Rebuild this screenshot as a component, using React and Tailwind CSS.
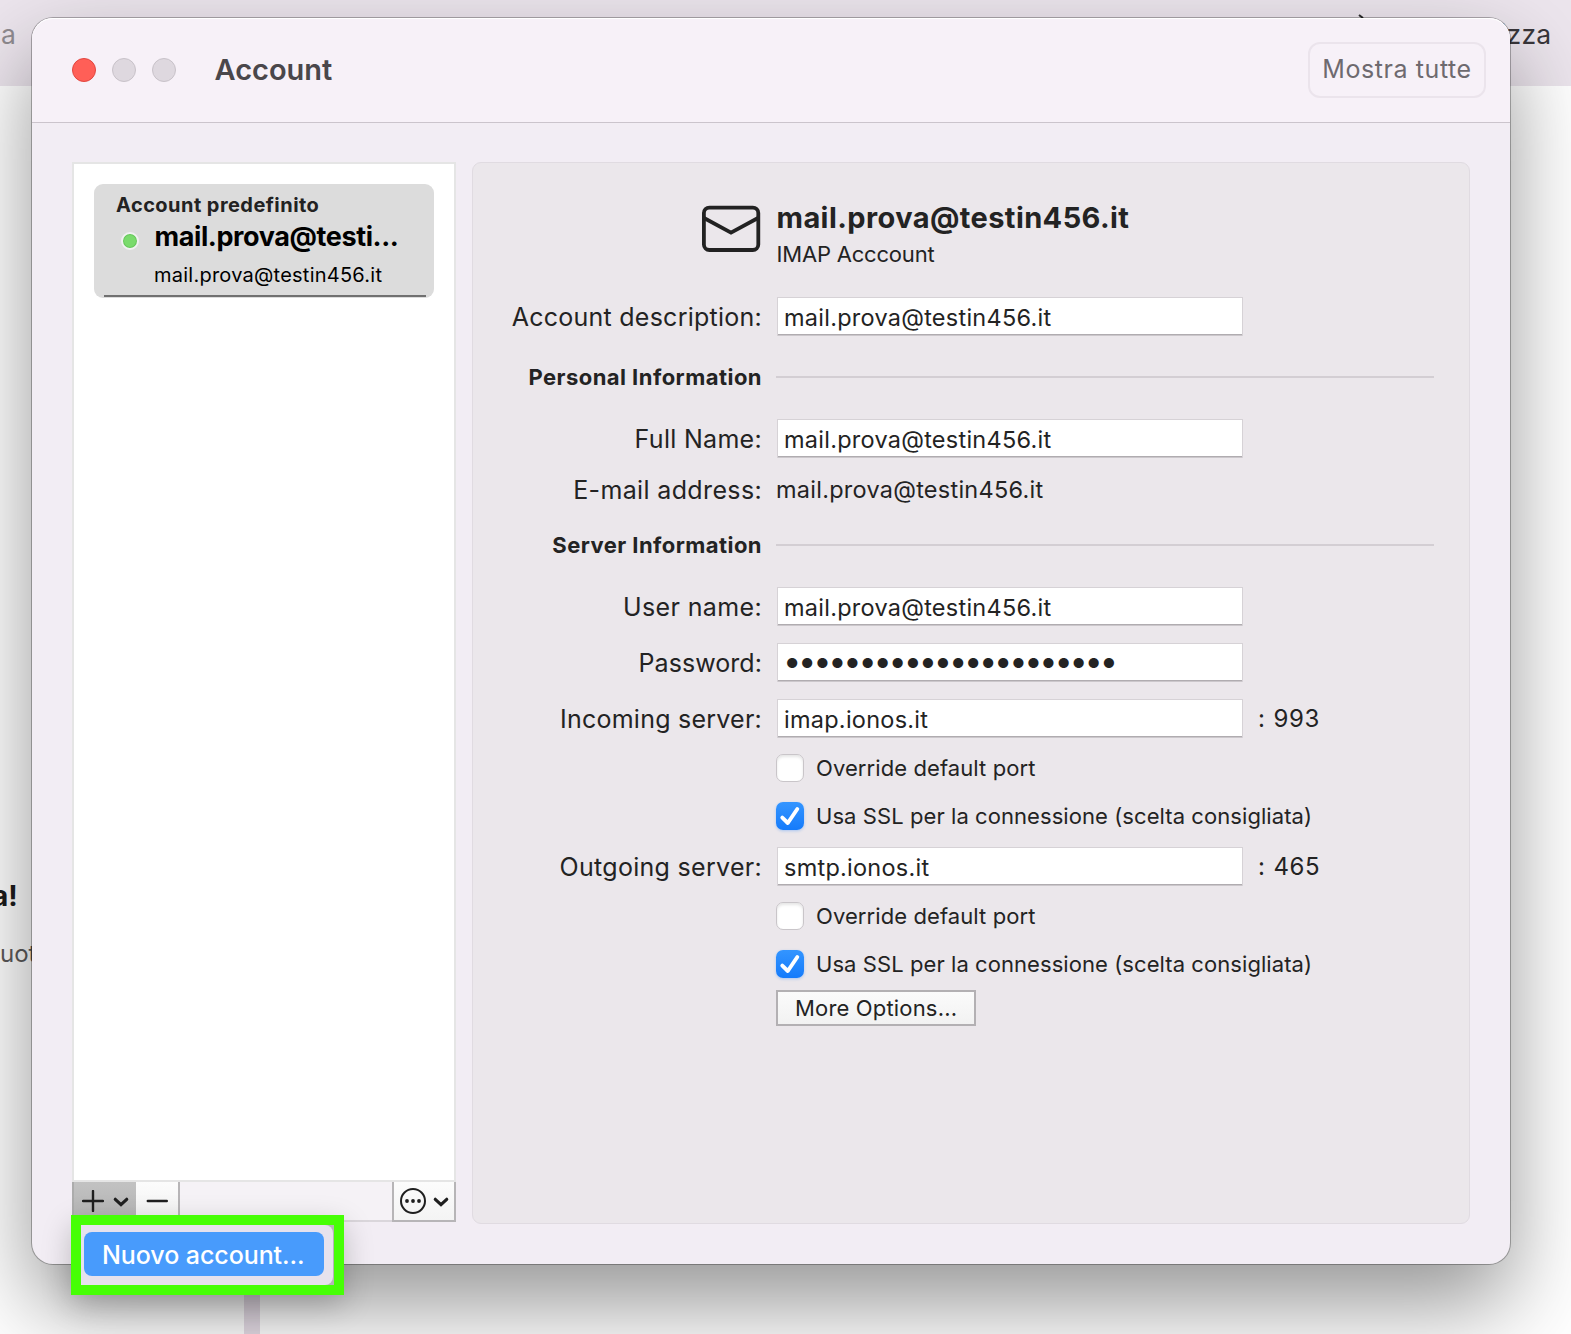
import React from "react";

const label = "w-[289px] shrink-0 text-right text-[25px] leading-[30px] whitespace-nowrap";

function Row({ text, spacing = "tracking-[0.3px]", children, className = "" }) {
  return (
    <div className={`flex items-center ${className}`}>
      <div className={`${label} ${spacing}`}>{text}</div>
      <div className="ml-[14px] flex items-center">{children}</div>
    </div>
  );
}

function Field({ children, className = "" }) {
  return (
    <div className="ml-px h-[39px] w-[466px] border border-b-0 border-[#d6d2d6] bg-white">
      <div className="h-[37px] border-b border-[#b0acb0]">
        <div
          className={`flex h-[38px] items-center border-b border-[#cbc7cb] pt-[2px] pl-[6px] text-[23.5px] tracking-[0.25px] whitespace-nowrap ${className}`}
        >
          {children}
        </div>
      </div>
    </div>
  );
}

function Section({ text, spacing, className }) {
  return (
    <div className={`flex h-[25px] items-center ${className}`}>
      <div className={`w-[290px] pr-px text-right text-[22px] font-bold ${spacing}`}>{text}</div>
      <div className="mb-[2px] ml-[13px] h-[2px] w-[658px] bg-[#d3ced3]" />
    </div>
  );
}

function Check({ checked, text, spacing, className }) {
  return (
    <div className={`ml-[303px] flex h-7 items-center ${className}`}>
      {checked ? (
        <div className="flex size-7 items-center justify-center rounded-[7px] bg-linear-to-b from-[#3395ff] to-[#147bfb] shadow-[0_1px_3px_rgba(20,123,251,0.3)]">
          <svg viewBox="0 0 28 28" className="size-7" fill="none">
            <path d="M6.3 15.6 11.8 21 21.3 7" stroke="#fff" strokeWidth="3.9" strokeLinecap="round" strokeLinejoin="round" />
          </svg>
        </div>
      ) : (
        <div className="size-7 rounded-[7px] border border-[#c9c5c9] bg-white shadow-[inset_0_2px_3px_rgba(0,0,0,0.1)]" />
      )}
      <span className={`ml-3 text-[22px] whitespace-nowrap ${spacing}`}>{text}</span>
    </div>
  );
}

function Port({ value }) {
  return (
    <div className="flex text-[24px]">
      <span className="ml-[15px] w-[15.5px]">:</span>
      <span className="tracking-[0.6px]">{value}</span>
    </div>
  );
}

function Chevron() {
  return (
    <svg viewBox="0 0 16 10" className="h-[10px] w-4" fill="none">
      <path d="M2.3 2.3 8 7.6 13.7 2.3" stroke="#1f1f1f" strokeWidth="3.2" strokeLinecap="round" strokeLinejoin="miter" />
    </svg>
  );
}

function Backdrop() {
  return (
    <div className="h-full w-full bg-white">
      <div className="flex h-[86px] items-start justify-between bg-[#ece5ed] pr-[19.5px] text-[26.5px] leading-[30px]">
        <div className="mt-[19px] ml-px text-[#8f8b90]">a</div>
        <div className="mt-[19px] tracking-[0.3px] text-[#39363a]">Organizza</div>
      </div>
      <div className="flex h-[1248px] flex-col">
        <div className="mt-[792px] -ml-[8px] h-9 text-[28px] leading-9 font-bold text-[#1c1c1c]">a!</div>
        <div className="mt-[24px] h-8 text-[24px] leading-8 text-[#5c5a5a]">uota</div>
        <div className="ml-[244px] w-4 flex-1 bg-[#e6dde7]" />
      </div>
    </div>
  );
}

function Sidebar() {
  return (
    <div className="flex h-[1060px] w-[384px] flex-col">
      <div className="h-[1020px] border-2 border-[#e5e5e5] bg-white pt-5 pl-5">
        <div className="h-[114px] w-[340px] rounded-[9px] bg-[#dcdcdc] pt-2">
          <div className="ml-[22px] text-[20px] leading-[26px] font-bold tracking-[0.45px] text-[#222]">Account predefinito</div>
          <div className="flex h-9 items-center">
            <div className="mt-[9px] ml-[27px] size-[18px] rounded-full border-2 border-[#f1f1f1] bg-[#7adb6c] shadow-[inset_0_0_0_1px_#66c55b]" />
            <div className="mt-[2px] ml-[15.5px] text-[27px] font-bold tracking-[-0.4px] text-black">mail.prova@testi...</div>
          </div>
          <div className="mt-2 ml-[60px] text-[20px] leading-[26px] tracking-[0.24px] text-black">mail.prova@testin456.it</div>
          <div className="mt-[7px] ml-[10px] h-[2px] w-[322px] bg-[#707070]" />
        </div>
      </div>
      <div className="flex h-10 border-b-2 border-[#dad6db] bg-[#f5f2f6]">
        <div className="flex h-10 w-16 items-center border-l-2 border-[#acacac] bg-linear-to-b from-[#c2c2c2] to-[#b2b2b2] pb-[2px]">
          <svg viewBox="0 0 22 22" className="ml-2 size-[22px]" fill="none">
            <path d="M11 1v20M1 11h20" stroke="#1f1f1f" strokeWidth="2.4" strokeLinecap="round" />
          </svg>
          <div className="mt-px ml-[9px]"><Chevron /></div>
        </div>
        <div className="flex h-10 w-11 items-center border-r-2 border-[#b7b5b7] bg-linear-to-b from-[#fcfcfc] to-[#f0f0f0]">
          <svg viewBox="0 0 22 22" className="ml-[10px] size-[22px]" fill="none">
            <path d="M1.8 10h19" stroke="#1f1f1f" strokeWidth="2.4" strokeLinecap="round" />
          </svg>
        </div>
        <div className="ml-auto flex h-10 w-16 items-center border-x-2 border-b-2 border-[#b7b5b7] bg-linear-to-b from-[#fcfcfc] to-[#f4f4f4]">
          <svg viewBox="0 0 28 28" className="ml-[5px] size-7" fill="none">
            <circle cx="14" cy="14" r="12" stroke="#1f1f1f" strokeWidth="2" />
            <circle cx="8" cy="14" r="1.9" fill="#1f1f1f" />
            <circle cx="14" cy="14" r="1.9" fill="#1f1f1f" />
            <circle cx="20" cy="14" r="1.9" fill="#1f1f1f" />
          </svg>
          <div className="mt-px ml-[6px]"><Chevron /></div>
        </div>
      </div>
    </div>
  );
}

function Details() {
  return (
    <div className="ml-4 h-[1062px] w-[998px] rounded-[9px] border border-[#e0dbe1] bg-[#ebe7eb] text-[#232323]">
      <div className="flex h-[134px] pt-[38px]">
        <svg viewBox="0 0 60 50" className="mt-[3px] ml-[228px] h-[50px] w-[60px]" fill="none" stroke="#222" strokeWidth="3.8">
          <rect x="2.9" y="3.6" width="54.4" height="42.4" rx="5.5" />
          <path d="M3 14 30 28.6 57 14" />
        </svg>
        <div className="ml-[15.5px]">
          <div className="text-[29px] leading-[34px] font-bold tracking-[0.41px]">mail.prova@testin456.it</div>
          <div className="mt-1 text-[22px] leading-[30px] tracking-[-0.19px]">IMAP Acccount</div>
        </div>
      </div>
      <Row text="Account description:" spacing="tracking-[0.25px]">
        <Field>mail.prova@testin456.it</Field>
      </Row>
      <Section text="Personal Information" spacing="tracking-[0.46px]" className="mt-[29px]" />
      <Row text="Full Name:" spacing="tracking-[0.3px]" className="mt-[29px]">
        <Field>mail.prova@testin456.it</Field>
      </Row>
      <Row text="E-mail address:" spacing="tracking-[0.36px]" className="mt-[17px] h-[29px]">
        <span className="text-[23.5px] tracking-[0.25px]">mail.prova@testin456.it</span>
      </Row>
      <Section text="Server Information" spacing="tracking-[0.44px]" className="mt-[29px]" />
      <Row text="User name:" spacing="tracking-[0.36px]" className="mt-[29px]">
        <Field>mail.prova@testin456.it</Field>
      </Row>
      <Row text="Password:" spacing="tracking-[0.06px]" className="mt-[17px]">
        <Field>
          <span className="pl-[2px] text-[13.5px] tracking-[2.74px]">●●●●●●●●●●●●●●●●●●●●●●</span>
        </Field>
      </Row>
      <Row text="Incoming server:" spacing="tracking-[0.24px]" className="mt-[17px]">
        <Field>imap.ionos.it</Field>
        <Port value="993" />
      </Row>
      <Check text="Override default port" spacing="tracking-[0.09px]" className="mt-4" />
      <Check checked text="Usa SSL per la connessione (scelta consigliata)" spacing="tracking-[0.07px]" className="mt-5" />
      <Row text="Outgoing server:" className="mt-[17px]">
        <Field>smtp.ionos.it</Field>
        <Port value="465" />
      </Row>
      <Check text="Override default port" spacing="tracking-[0.09px]" className="mt-4" />
      <Check checked text="Usa SSL per la connessione (scelta consigliata)" spacing="tracking-[0.07px]" className="mt-5" />
      <div className="mt-3 ml-[303px] flex h-9 w-[200px] items-center border-2 border-[#b3b0b3] bg-linear-to-b from-[#fbfbfb] to-[#f2f2f2] pt-px pl-[17px] text-[22px] tracking-[0.17px] whitespace-nowrap">
        More Options...
      </div>
    </div>
  );
}

export default function App() {
  return (
    <div className="relative h-[1334px] w-[1571px] overflow-hidden font-['Inter',sans-serif]">
      <Backdrop />
      <svg viewBox="0 0 6 4" className="absolute top-[14px] left-[1358px] h-1 w-[6px]">
        <path d="M1 1 5 4" stroke="#2b2b2b" strokeWidth="2" />
      </svg>

      <div className="absolute top-[18px] left-[32px] h-[1246px] w-[1478px] rounded-[21px] bg-[#f2edf4] shadow-[0_0_0_1px_rgba(0,0,0,0.28),0_40px_88px_rgba(0,0,0,0.42)]">
        <div className="flex h-[105px] items-center rounded-t-[21px] border-b border-[#cbc4cc] bg-[#f7f1f8] pl-10 shadow-[inset_0_1px_0_#fff]">
          <div className="flex gap-4">
            <div className="size-6 rounded-full border border-[#e2463f] bg-[#ff5f57]" />
            <div className="size-6 rounded-full border border-[#c8c2c9] bg-[#ded8df]" />
            <div className="size-6 rounded-full border border-[#c8c2c9] bg-[#ded8df]" />
          </div>
          <div className="ml-[38.5px] text-[29px] font-semibold text-[#4a474b]">Account</div>
          <div className="mr-6 ml-auto flex h-14 w-[178px] items-center justify-center rounded-[12px] border-2 border-[#ebe4ec] text-[25px] tracking-[0.58px] text-[#6e6a6f]">
            Mostra tutte
          </div>
        </div>
        <div className="flex pt-[39px] pl-10">
          <Sidebar />
          <Details />
        </div>
      </div>

      <div className="absolute top-[1215px] left-[71px] h-[80px] w-[273px] rounded-[8px] shadow-[0_10px_30px_rgba(0,0,0,0.22)]" />
      <div className="absolute top-[1215px] left-[71px] h-[80px] w-[273px] border-[10px] border-[#46ff05] bg-[#b5b3b6]">
        <div className="h-[60px] w-[252px] rounded-r-[8px] bg-[#e6e2ed] pt-[7px] pl-[3px]">
          <div className="flex h-11 w-60 items-center rounded-[8px] bg-[#489bfc] pt-[3px] pl-[18px] text-[25px] font-medium tracking-[-0.07px] whitespace-nowrap text-white">
            Nuovo account...
          </div>
        </div>
      </div>
    </div>
  );
}
